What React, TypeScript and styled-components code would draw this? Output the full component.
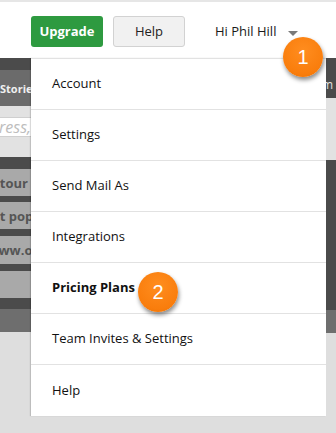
import React from 'react';
import styled, {createGlobalStyle} from "styled-components";

const GlobalStyle = createGlobalStyle`
  html, body {
    margin: 0;
    padding: 0;
    background: #dedede;
  }
  body {
    font-family: "Open Sans", "Liberation Sans", sans-serif;
    width: 336px;
    height: 433px;
    overflow: hidden;
  }
`

type Band = {
    height: number
    tone: 'dark' | 'mid' | 'light' | 'row' | 'input' | 'bottom'
    text?: string
    inset?: number
}

// left column sits under the dropdown, only its first 31px show
const leftBands: Array<Band> = [
    {height: 12, tone: 'dark'},
    {height: 36, tone: 'mid', text: 'Stories', inset: 132},
    {height: 11, tone: 'light'},
    {height: 20, tone: 'input', text: 'Email address,', inset: 139},
    {height: 20, tone: 'light'},
    {height: 12, tone: 'dark'},
    {height: 27, tone: 'row', text: 'Take the tour', inset: 142},
    {height: 6, tone: 'dark'},
    {height: 27, tone: 'row', text: 'First popup', inset: 120},
    {height: 7, tone: 'dark'},
    {height: 28, tone: 'row', text: 'www.otto.com', inset: 87},
    {height: 7, tone: 'dark'},
    {height: 27, tone: 'row'},
    {height: 11, tone: 'dark'},
    {height: 23, tone: 'bottom'},
]

const rightBands: Array<Band> = [
    {height: 40, tone: 'dark', text: 'Custom', inset: 3},
    {height: 62, tone: 'light'},
    {height: 150, tone: 'dark'},
    {height: 23, tone: 'bottom'},
]

const menuItems = [
    'Account',
    'Settings',
    'Send Mail As',
    'Integrations',
    'Pricing Plans',
    'Team Invites & Settings',
    'Help',
]

const App = () => {
    return (
        <Page>
            <GlobalStyle/>
            <Header>
                <UpgradeButton>Upgrade</UpgradeButton>
                <HelpButton>Help</HelpButton>
                <UserName>Hi Phil Hill</UserName>
                <Caret/>
                <Badge top={35} left={283}>1</Badge>
            </Header>
            <Body>
                <LeftPanel>
                    {leftBands.map((b, index) => (
                        <BandRow key={index} h={b.height} tone={b.tone} inset={b.inset ?? 0}>
                            {b.text}
                        </BandRow>
                    ))}
                </LeftPanel>
                <RightPanel>
                    {rightBands.map((b, index) => (
                        <BandRow key={index} h={b.height} tone={b.tone} inset={b.inset ?? 0}>
                            {b.text}
                        </BandRow>
                    ))}
                </RightPanel>
                <Menu>
                    {menuItems.map((item) => (
                        <MenuItem key={item} strong={item === 'Pricing Plans'}>{item}</MenuItem>
                    ))}
                </Menu>
                <Badge top={214} left={138}>2</Badge>
            </Body>
        </Page>
    );
};

const Page = styled.div`
  width: 336px;
  height: 433px;
  position: relative;
  background: #dedede;
`

const Header = styled.div`
  position: relative;
  height: 58px;
  box-sizing: border-box;
  border-top: 2px solid #e6e6e6;
  background: #fff;
  display: flex;
  align-items: center;
  padding-left: 31px;
  padding-top: 2px;
`

const BaseButton = styled.div`
  width: 72px;
  height: 31px;
  border-radius: 3px;
  box-sizing: border-box;
  display: flex;
  align-items: center;
  justify-content: center;
  font-size: 13px;
`

const UpgradeButton = styled(BaseButton)`
  background: #2e9a40;
  color: #fff;
  font-weight: 700;
`

const HelpButton = styled(BaseButton)`
  margin-left: 10px;
  background: #f1f1f1;
  border: 1px solid #d2d2d2;
  color: #222;
`

const UserName = styled.span`
  margin-left: 30px;
  font-size: 13px;
  color: #1a1a1a;
`

const Caret = styled.span`
  margin-left: 12px;
  margin-top: 5px;
  width: 0;
  height: 0;
  border-left: 5px solid transparent;
  border-right: 5px solid transparent;
  border-top: 5px solid #7a7a7a;
`

const Body = styled.div`
  position: relative;
  display: flex;
  height: 375px;
`

const LeftPanel = styled.div`
  width: 170px;
  display: flex;
  flex-direction: column;
`

const RightPanel = styled.div`
  flex: 1;
  display: flex;
  flex-direction: column;
`

const toneStyles = {
    dark: 'background: #4b4b4b; color: #e0e0e0; font-size: 12px; align-items: flex-end; padding-bottom: 5px;',
    mid: 'background: #6b6b6b; color: #f0f0f0; font-weight: 700; font-size: 11px;',
    light: 'background: #e2e2e2;',
    row: 'background: #a9a9a9; color: #555; font-weight: 700; font-size: 13px;',
    input: 'background: #fff; color: #bdbdbd; font-style: italic; font-size: 16px; border-top: 1px solid #cfcfcf; border-bottom: 1px solid #cfcfcf;',
    bottom: 'background: #6e6e6e;',
}

const BandRow = styled.div<{ h: number, tone: Band['tone'], inset: number }>`
  height: ${p => p.h}px;
  box-sizing: border-box;
  display: flex;
  align-items: center;
  justify-content: flex-end;
  padding-right: ${p => p.inset}px;
  white-space: nowrap;
  overflow: hidden;
  ${p => toneStyles[p.tone]}
`

const Menu = styled.div`
  position: absolute;
  left: 31px;
  top: 0;
  width: 295px;
  background: #fff;
  border-top: 1px solid #e2e2e2;
  box-shadow: -1px 0 1px rgba(0, 0, 0, 0.15);
`

const MenuItem = styled.div<{ strong?: boolean }>`
  height: 51px;
  box-sizing: border-box;
  display: flex;
  align-items: center;
  padding-left: 21px;
  padding-bottom: 2px;
  font-size: 13px;
  color: #111;
  font-weight: ${p => p.strong ? 700 : 400};
  border-bottom: 1px solid #e2e2e2;

  &:last-child {
    border-bottom: none;
  }
`

const Badge = styled.div<{ top: number, left: number }>`
  position: absolute;
  top: ${p => p.top}px;
  left: ${p => p.left}px;
  width: 40px;
  height: 40px;
  border-radius: 50%;
  background: radial-gradient(circle at 50% 35%, #ff8d1f 0%, #f97d0c 70%, #e96f00 100%);
  color: #fff;
  font-family: "Liberation Sans", Arial, sans-serif;
  font-size: 20px;
  display: flex;
  align-items: center;
  justify-content: center;
  box-shadow: 1px 3px 4px rgba(0, 0, 0, 0.45);
  z-index: 2;
`

export default App;
